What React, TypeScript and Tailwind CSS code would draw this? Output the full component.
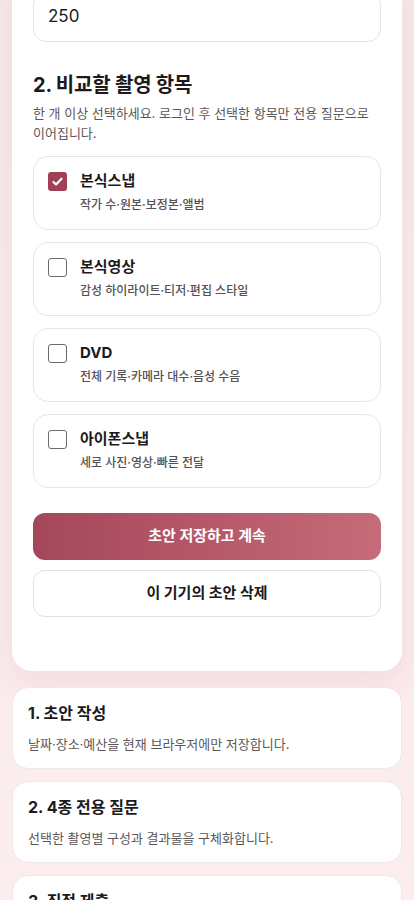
import React, { useState } from "react";

const font = { fontFamily: 'Inter, "Noto Sans CJK KR", "Noto Sans", sans-serif' };

const options = [
  { title: "본식스냅", sub: "작가 수·원본·보정본·앨범" },
  { title: "본식영상", sub: "감성 하이라이트·티저·편집 스타일" },
  { title: "DVD", sub: "전체 기록·카메라 대수·음성 수음" },
  { title: "아이폰스냅", sub: "세로 사진·영상·빠른 전달" },
];

const steps = [
  { title: "1. 초안 작성", sub: "날짜·장소·예산을 현재 브라우저에만 저장합니다." },
  { title: "2. 4종 전용 질문", sub: "선택한 촬영별 구성과 결과물을 구체화합니다." },
  { title: "3. 직접 제출", sub: "검토 후 업체에 직접 제출합니다." },
];

export default function App() {
  const [checked, setChecked] = useState<boolean[]>([true, false, false, false]);
  return (
    <div style={font} className="min-h-screen bg-gradient-to-b from-[#f8e9eb] to-[#fcedef] px-3 pb-10 overflow-hidden">
      <div className="-mt-[29px] bg-white rounded-[20px] px-[21px] pt-[21px] pb-[54px] shadow-[0_12px_32px_rgba(170,70,90,0.10)]">
        <div className="h-[50px] rounded-[13px] border border-[#e6e1e3] flex items-center px-[14px] text-[17px] text-[#1c1a1b]">
          250
        </div>
        <h2 className="mt-[29px] text-[20px] leading-[28px] font-bold text-[#1e1a1c] tracking-[-0.2px]">
          2. 비교할 촬영 항목
        </h2>
        <p className="mt-[4px] text-[13px] leading-[20px] text-[#5c5759]">
          한 개 이상 선택하세요. 로그인 후 선택한 항목만 전용 질문으로 이어집니다.
        </p>
        <div className="mt-[13px] flex flex-col gap-3">
          {options.map((o, i) => (
            <button
              key={o.title}
              onClick={() => setChecked((c) => c.map((v, j) => (j === i ? !v : v)))}
              className="text-left flex items-start gap-[13px] rounded-[15px] border border-[#e9e4e6] bg-white px-[14px] pt-[13px] pb-[15px]"
            >
              <span
                className={
                  checked[i]
                    ? "mt-[2px] w-[19px] h-[19px] rounded-[3px] bg-[#a03f55] flex items-center justify-center shrink-0"
                    : "mt-[2px] w-[19px] h-[19px] rounded-[3px] border border-[#6e6a6c] bg-white shrink-0"
                }
              >
                {checked[i] && (
                  <svg width="13" height="13" viewBox="0 0 16 16" fill="none">
                    <path d="M3 8.5l3.2 3.2L13 4.5" stroke="white" strokeWidth="2.6" strokeLinecap="round" strokeLinejoin="round" />
                  </svg>
                )}
              </span>
              <span className="flex flex-col">
                <span className="text-[15px] leading-[22px] font-bold text-[#1c1a1b]">{o.title}</span>
                <span className="mt-1 text-[12px] leading-[18px] text-[#555153] font-medium">{o.sub}</span>
              </span>
            </button>
          ))}
        </div>
        <button className="mt-[25px] w-full h-[47px] rounded-[12px] bg-gradient-to-r from-[#a4475b] to-[#c66b79] text-white text-[15px] font-bold">
          초안 저장하고 계속
        </button>
        <button className="mt-[10px] w-full h-[47px] rounded-[12px] border border-[#e3dee0] bg-white text-[#1c1a1b] text-[15px] font-bold">
          이 기기의 초안 삭제
        </button>
      </div>
      <div className="mt-4 flex flex-col gap-3">
        {steps.map((s) => (
          <div key={s.title} className="bg-white rounded-[16px] border border-[#f1e6e8] px-[15px] pt-[14px] pb-[14px]">
            <div className="text-[16px] leading-[22px] font-bold text-[#1c1a1b]">{s.title}</div>
            <div className="mt-[10px] text-[13px] leading-[20px] text-[#5c5759]">{s.sub}</div>
          </div>
        ))}
      </div>
    </div>
  );
}
